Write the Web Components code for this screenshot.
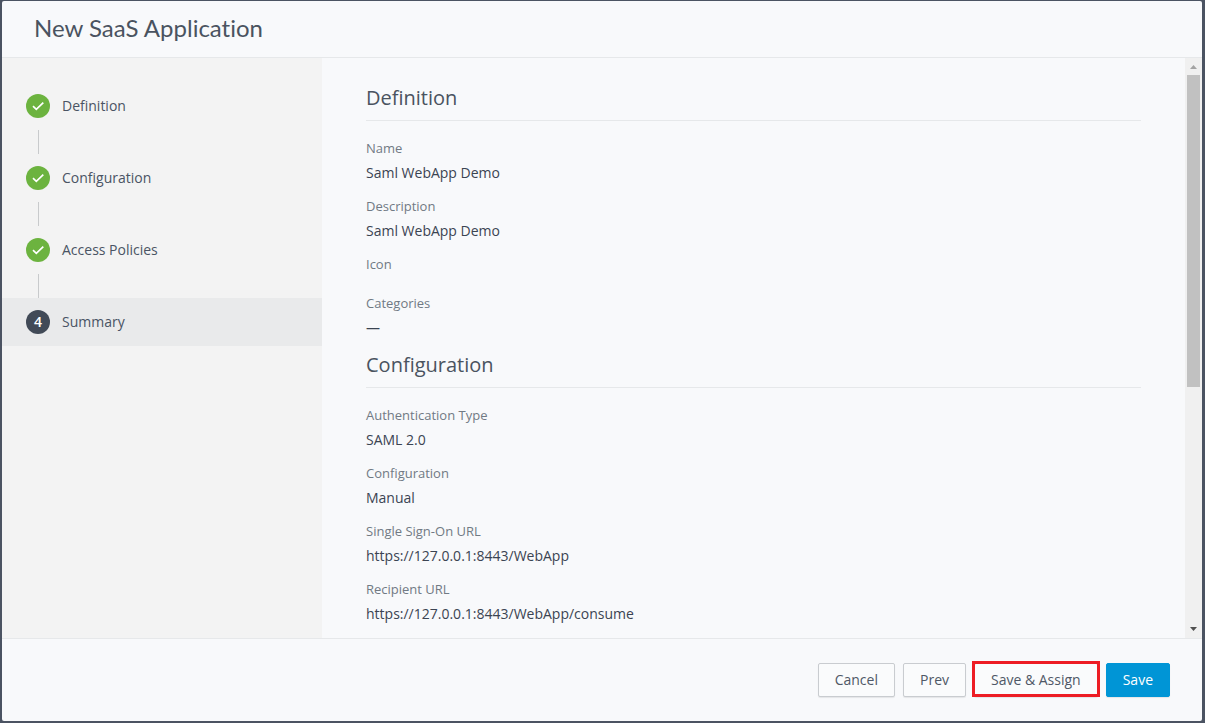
<!DOCTYPE html>
<html lang="en">
<head>
<meta charset="utf-8">
<title>New SaaS Application</title>
<style>
  html, body { margin: 0; height: 100%; }
  body { background: #4b5362; font-family: "Open Sans", "Noto Sans", sans-serif; font-size: 14px; line-height: 20px; color: #414a57; }
</style>
</head>
<body>
<app-wizard heading="New SaaS Application">
  <wizard-steps slot="steps">
    <wizard-step state="done" number="1">Definition</wizard-step>
    <wizard-step state="done" number="2">Configuration</wizard-step>
    <wizard-step state="done" number="3">Access Policies</wizard-step>
    <wizard-step state="current" number="4">Summary</wizard-step>
  </wizard-steps>
  <summary-section heading="Definition">
    <summary-field label="Name">Saml WebApp Demo</summary-field>
    <summary-field label="Description">Saml WebApp Demo</summary-field>
    <summary-field label="Icon"></summary-field>
    <summary-field label="Categories">—</summary-field>
  </summary-section>
  <summary-section heading="Configuration">
    <summary-field label="Authentication Type">SAML 2.0</summary-field>
    <summary-field label="Configuration">Manual</summary-field>
    <summary-field label="Single Sign-On URL">https://127.0.0.1:8443/WebApp</summary-field>
    <summary-field label="Recipient URL">https://127.0.0.1:8443/WebApp/consume</summary-field>
  </summary-section>
  <wizard-button slot="actions">Cancel</wizard-button>
  <wizard-button slot="actions">Prev</wizard-button>
  <wizard-button slot="actions" marked>Save &amp; Assign</wizard-button>
  <wizard-button slot="actions" primary>Save</wizard-button>
</app-wizard>

<script>
  function define(name, render) {
    customElements.define(name, class extends HTMLElement {
      constructor() {
        super();
        this.attachShadow({ mode: "open" });
      }
      connectedCallback() {
        this.shadowRoot.innerHTML = render(this);
      }
    });
  }

  define("app-wizard", el => `
    <style>
      :host { display: block; height: 100%; box-sizing: border-box; padding: 1px 3px 2px 2px; }
      .dialog { height: 100%; display: flex; flex-direction: column; background: #f8f9fb; border-radius: 2px; overflow: hidden; }
      header { padding: 11px 32px 13px; border-bottom: 1px solid #e6e8ea; }
      h1 { margin: 0; font: 400 24px/32px Lato, "Open Sans", sans-serif; font-variant-ligatures: none; color: #4a5360; }
      .body { flex: 1; min-height: 0; display: flex; }
      nav { width: 320px; flex: none; background: #f3f3f3; }
      main { flex: 1; min-width: 0; overflow: auto; scrollbar-width: none; box-sizing: border-box; padding: 26px 44px 0; }
      footer { display: flex; justify-content: flex-end; gap: 8px; padding: 24px 32px; border-top: 1px solid #e6e8ea; }
    </style>
    <div class="dialog">
      <header><h1>${el.getAttribute("heading")}</h1></header>
      <div class="body">
        <nav aria-label="Steps"><slot name="steps"></slot></nav>
        <main><slot></slot></main>
        <scroll-rail></scroll-rail>
      </div>
      <footer><slot name="actions"></slot></footer>
    </div>`);

  define("wizard-steps", () => `
    <style>:host { display: block; padding-top: 24px; }</style>
    <slot></slot>`);

  define("wizard-step", el => `
    <style>
      :host { display: block; }
      .row { display: flex; align-items: center; gap: 12px; height: 48px; padding: 0 24px; color: #4a5464; }
      .badge { width: 24px; height: 24px; border-radius: 50%; display: grid; place-items: center; background: #6cb33f; color: #fff; font-weight: 600; }
      :host([state="current"]) .row { background: #e9eaeb; }
      :host([state="current"]) .badge { background: #414a57; }
      .link { width: 1px; height: 24px; margin-left: 36px; background: #c8cacc; }
      :host(:last-child) .link { display: none; }
      svg { display: block; }
    </style>
    <div class="row">
      <span class="badge">${el.getAttribute("state") === "done"
        ? `<svg width="24" height="24" viewBox="0 0 24 24" role="img" aria-label="Completed"><path d="M7 12.2 10.3 15.3 17.3 8.6" fill="none" stroke="#fff" stroke-width="1.7"/></svg>`
        : el.getAttribute("number")}</span>
      <span><slot></slot></span>
    </div>
    <div class="link"></div>`);

  define("summary-section", el => `
    <style>
      :host { display: block; }
      h2 { margin: 0 0 17px; padding-bottom: 8px; border-bottom: 1px solid #e6e8ea; font-size: 20px; line-height: 28px; font-weight: 400; color: #4a5360; }
    </style>
    <section><h2>${el.getAttribute("heading")}</h2><slot></slot></section>`);

  define("summary-field", el => `
    <style>
      :host { display: block; padding-bottom: 14px; }
      dl, dd { margin: 0; }
      dt { font-size: 13px; line-height: 20px; margin-bottom: 5px; color: #717a84; }
      dd { line-height: 19px; color: #3b4452; }
    </style>
    <dl><dt>${el.getAttribute("label")}</dt><dd><slot></slot></dd></dl>`);

  define("wizard-button", () => `
    <style>
      :host { display: block; position: relative; }
      button { display: block; box-sizing: border-box; height: 34px; padding: 0 16px; border: 1px solid #c9ccd0; border-radius: 2px; background: #fafbfc; color: #4f5866; font: inherit; box-shadow: 0 1px 1px rgba(0,0,0,.08); }
      :host([primary]) button { background: #0095d6; border-color: #0095d6; color: #fff; font-weight: 500; }
      :host([marked])::after { content: ""; position: absolute; inset: -2px -2px 0; border: 3px solid #ed1c24; pointer-events: none; }
    </style>
    <button type="button"><slot></slot></button>`);

  define("scroll-rail", () => `
    <style>
      :host { display: flex; flex-direction: column; width: 17px; flex: none; background: #f0f0f0; }
      svg { display: block; flex: none; }
      .thumb { flex: 4; margin: 0 2px; background: #c1c1c1; }
      .rest { flex: 3; }
    </style>
    <svg width="17" height="17" aria-hidden="true"><path d="M5 11 8.5 7 12 11z" fill="#a3a3a3"/></svg>
    <div class="thumb"></div>
    <div class="rest"></div>
    <svg width="17" height="17" aria-hidden="true"><path d="M5 6 8.5 10 12 6z" fill="#505050"/></svg>`);
</script>
</body>
</html>
